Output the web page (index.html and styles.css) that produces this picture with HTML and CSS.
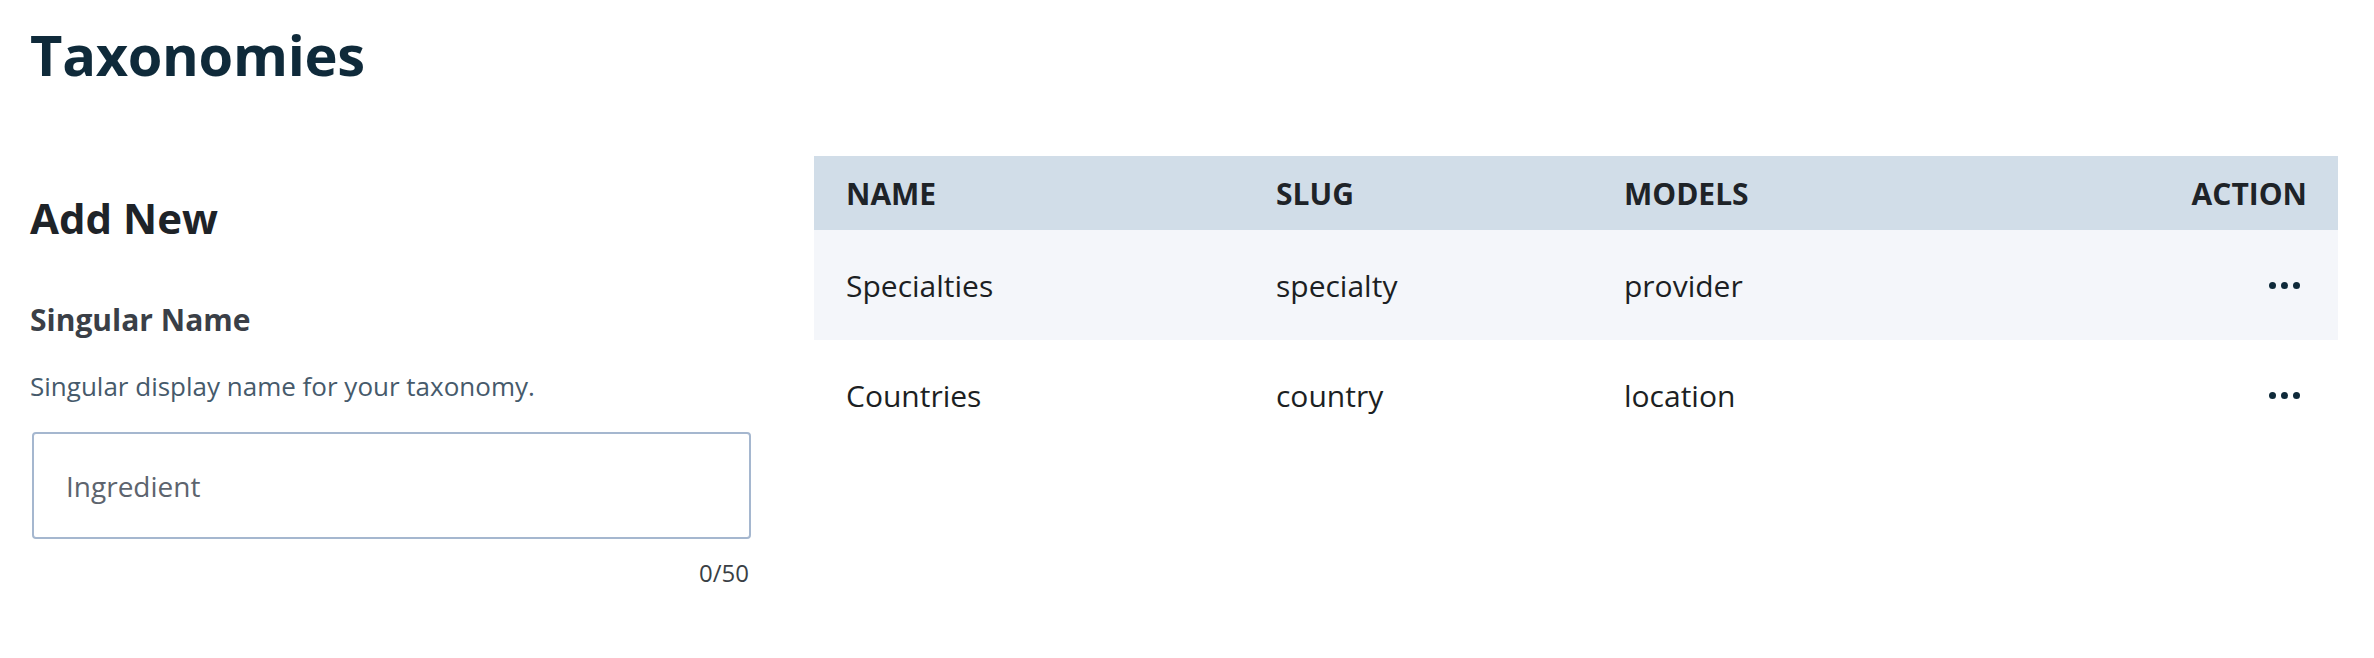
FILE: index.html
```html
<!DOCTYPE html>
<html lang="en">
<head>
<meta charset="utf-8">
<title>Taxonomies</title>
<link rel="stylesheet" href="styles.css">
</head>
<body>
<div class="page">
  <h1 class="page-title">Taxonomies</h1>
  <div class="content">
    <section class="form-col">
      <h2 class="form-title">Add New</h2>
      <label class="field-label" for="singular">Singular Name</label>
      <p class="field-help">Singular display name for your taxonomy.</p>
      <input class="text-input" id="singular" type="text" placeholder="Ingredient">
      <div class="counter">0/50</div>
    </section>
    <section class="table-col">
      <table class="tax-table">
        <thead>
          <tr>
            <th class="c-name">Name</th>
            <th class="c-slug">Slug</th>
            <th class="c-models">Models</th>
            <th class="c-action">Action</th>
          </tr>
        </thead>
        <tbody>
          <tr class="alt">
            <td>Specialties</td>
            <td>specialty</td>
            <td>provider</td>
            <td class="c-action"><span class="dots"><svg width="31" height="7" viewBox="0 0 31 7"><circle cx="3.5" cy="3.5" r="3.5"/><circle cx="15.5" cy="3.5" r="3.5"/><circle cx="27.5" cy="3.5" r="3.5"/></svg></span></td>
          </tr>
          <tr>
            <td>Countries</td>
            <td>country</td>
            <td>location</td>
            <td class="c-action"><span class="dots"><svg width="31" height="7" viewBox="0 0 31 7"><circle cx="3.5" cy="3.5" r="3.5"/><circle cx="15.5" cy="3.5" r="3.5"/><circle cx="27.5" cy="3.5" r="3.5"/></svg></span></td>
          </tr>
        </tbody>
      </table>
    </section>
  </div>
</div>
</body>
</html>
```

FILE: styles.css
```css
* { box-sizing: border-box; }
html, body { margin: 0; padding: 0; background: #ffffff; }
body { font-family: "Open Sans", "Noto Sans", sans-serif; color: #1e2328; }

.page { padding: 18px 36px 0 30px; }

.page-title {
  margin: 0;
  font-size: 56px;
  line-height: 72px;
  font-weight: 700;
  letter-spacing: -0.3px;
  color: #0f2a3a;
}

.content {
  margin-top: 66px;
  display: flex;
  gap: 63px;
  align-items: flex-start;
}

.form-col {
  width: 721px;
  flex: none;
  padding-top: 34px;
  display: flex;
  flex-direction: column;
}

.form-title {
  margin: 0;
  font-size: 42px;
  line-height: 56px;
  font-weight: 700;
  color: #1e2328;
}

.field-label {
  margin-top: 54px;
  font-size: 30px;
  line-height: 40px;
  font-weight: 700;
  color: #3a3f47;
}

.field-help {
  margin: 28px 0 0;
  font-size: 26px;
  line-height: 36px;
  color: #465a6b;
}

.text-input {
  margin: 28px 0 0 2px;
  width: 719px;
  height: 107px;
  border: 2px solid #a5b7cf;
  border-radius: 4px;
  padding: 0 32px;
  font-family: inherit;
  font-size: 28px;
  color: #1e2328;
  background: #fff;
  outline: none;
}
.text-input::placeholder { color: #5d646e; opacity: 1; }

.counter {
  margin-top: 18px;
  padding-right: 2px;
  text-align: right;
  font-size: 24px;
  line-height: 32px;
  color: #3a3f45;
}

.table-col { flex: 1; }

.tax-table {
  width: 100%;
  border-collapse: collapse;
  table-layout: fixed;
}

.tax-table th {
  background: #d1dde8;
  height: 74px;
  padding: 0 0 0 32px;
  text-align: left;
  text-transform: uppercase;
  font-size: 30px;
  font-weight: 700;
  color: #1e2328;
  vertical-align: middle;
}

.tax-table td {
  height: 110px;
  padding: 0 0 0 32px;
  font-size: 30px;
  color: #1c1f23;
  vertical-align: middle;
}

.tax-table tr.alt td { background: #f4f6fa; }

.c-name { width: 430px; }
.c-slug { width: 348px; }
.tax-table th.c-action { text-align: right; padding: 0 31px 0 0; }
.tax-table td.c-action { text-align: right; padding: 0 34px 0 0; }

.dots {
  display: inline-flex;
  margin-right: 4px;
  margin-bottom: 6px;
  vertical-align: middle;
}
.dots svg { fill: #0f2a3a; display: block; }
```
